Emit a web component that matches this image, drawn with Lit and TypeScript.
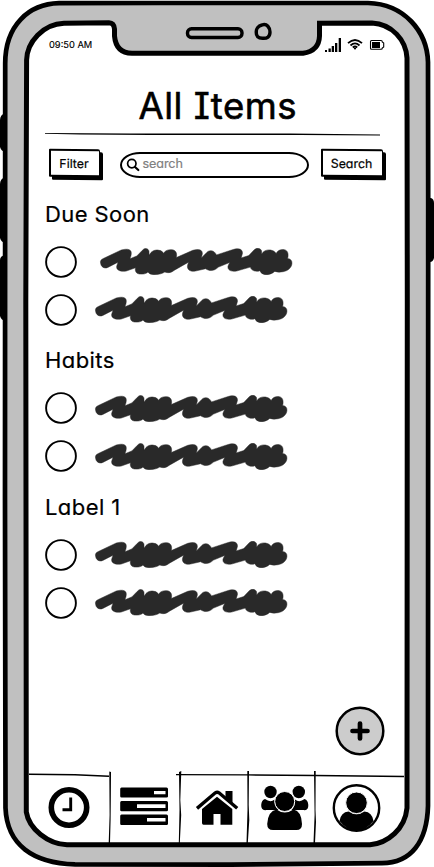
import { LitElement, html, svg, css } from "lit";
import { customElement, property } from "lit/decorators.js";

@customElement("phone-frame")
class PhoneFrame extends LitElement {
  static styles = css`
    :host { display: block; position: absolute; inset: 0; }
    svg { display: block; }
  `;
  render() {
    return html`<svg width="434" height="867" viewBox="0 0 434 867">
      <g fill="#000">
        <path d="M5 113Q0 115 0 120V147Q1 151 5 152ZM5 177Q0 179 0 184V238Q1 242 5 243ZM5 255Q0 256 0 260V316Q1 320 5 321Z" />
        <path d="M427 198H431Q434 199 434 203V258Q433 262 430 262H427Z" />
      </g>
      <path fill="#c0c0c0" stroke="#000" stroke-width="4.700"
        d="M5.200 64C5 25 29 4 59 3.200L160 3H368C404 4 427 31 428 62L428.200 200L428 806C427 842 411 863 382 863.200L230 864.600L75 864.400C33 863 7 845 5.500 808L5 500Z" />
      <path fill="#fff" stroke="#000" stroke-width="5"
        d="M26.600 60C27 42 43 24 64 23.200L109 22.800Q114 23 114.500 29V36Q116 53 132 53.300H303Q319 51 319.500 36V23.300L372 23C392 24 406 40 407 58L407.300 300L407 808C405 829 388 843 370 844.800H67C48 844 29 829 26.300 812L25.800 300Z" />
      <rect x="187.500" y="28.800" width="54.500" height="8.700" rx="4" fill="#c0c0c0" stroke="#000" stroke-width="3.400" />
      <path d="M262 25C267 23 270 28 270 32C270 37 267 38.500 263 38.300C258 38.500 256 36 256.300 32C256 29 258 26 262 25Z" fill="#c0c0c0" stroke="#000" stroke-width="3.400" />
    </svg>`;
  }
}

@customElement("status-bar")
class StatusBar extends LitElement {
  static styles = css`
    :host { display: flex; justify-content: space-between; height: 18px; padding: 36px 49px 0 49px; align-items: center; }
    .time { font-size: 9.3px; letter-spacing: 0; -webkit-text-stroke: 0.150px #000; }
    svg { display: block; }
  `;
  render() {
    return html`<span class="time">09:50 AM</span>
      <svg width="60" height="16" viewBox="325 37 60 16">
        <path d="M325 50h2v2h-2zM328.500 48.500h2.300V52h-2.300zM331.700 46h2.300v6h-2.300zM335 43h2.300v9H335zM338.700 38h2.300v14h-2.300z" />
        <g fill="none" stroke="#000" stroke-width="1.800">
          <path d="M348 43.200Q355 36.700 362 43.200M350.500 45.500Q355 41.300 359.500 45.500M352.800 47.500Q355 45.500 357.200 47.500" />
        </g>
        <circle cx="355" cy="48.500" r="1.100" />
        <path fill="none" stroke="#000" stroke-width="1.100" d="M371.500 40.500H381Q382.300 40.500 382.300 42L383.700 43V47L382.300 48Q382.300 49.300 381 49.300H371.500Q370.500 49.300 370.500 48.300V41.500Q370.500 40.500 371.500 40.500Z" />
        <path d="M372 42h8v6h-8z" />
      </svg>`;
  }
}

@customElement("sketch-button")
class SketchButton extends LitElement {
  @property() label = "";
  static styles = css`
    :host { display: block; }
    .box { box-sizing: border-box; height: 28px; display: flex; align-items: center; justify-content: center; padding: 2px 1.5px 0 0;
      border: 2px solid #000; border-right-width: 1.6px; background: #fff; border-radius: 1px 2px 1px 1px;
      box-shadow: 3px 3px 0 #000; font-size: 12.4px; transform: skewY(0.4deg); -webkit-text-stroke: 0.200px #000; }
  `;
  render() {
    return html`<div class="box">${this.label}</div>`;
  }
}

@customElement("task-row")
class TaskRow extends LitElement {
  @property({ type: Boolean, reflect: true }) indented = false;
  static styles = css`
    :host { display: flex; align-items: center; height: 48.2px; gap: 16.600px; }
    :host([indented]) { gap: 21.500px; }
    svg { display: block; flex: none; }
  `;
  render() {
    return html`<svg width="32" height="32" viewBox="0 0 32 32">
        <circle cx="16" cy="16" r="14.900" fill="#fff" stroke="#000" stroke-width="1.900" />
      </svg>
      <svg width="194.500" height="27" viewBox="10 20 585 82">
        <path fill="#292929" stroke="#292929" stroke-width="1.500" stroke-linejoin="round"
          d="M12 66C10 58 14 55 22 51L75 26C95 21 107 24 105 38Q105 44 101 53L122 44L139 27C146 18 158 21 159 31V42C166 30 174 26 185 26Q198 26 203 36C211 24 224 24 233 26C243 30 244 38 242 49L292 27C312 22 322 26 321 38L318 50L333 35C342 24 357 26 364 41L410 26C430 19 443 22 443 36L439 50L462 43L478 26C486 18 498 20 501 29V38C508 27 519 25 528 26Q541 28 545 37C551 25 562 24 570 25C582 28 583 40 580 52C590 53 594 59 593 68C592 80 580 90 566 92Q552 95 541 91C531 99 522 101 512 101Q499 99 496 89C484 94 468 88 467 78L425 90C405 93 397 85 399 75L404 64L370 78C356 91 343 91 331 83L300 90C282 93 274 84 276 73L279 63L235 88C226 96 215 96 207 93C197 99 186 101 175 101Q160 101 156 93C150 99 140 100 130 99C119 97 116 90 118 80L90 90C68 93 59 85 61 75L65 63L34 79C23 84 13 77 12 66Z" />
      </svg>`;
  }
}

const icons = {
  clock: svg`<circle cx="69" cy="807.500" r="17.700" fill="none" stroke="#000" stroke-width="5.600"/>
    <path d="M70.700 797.500V809.700H62.500" fill="none" stroke="#000" stroke-width="2.900"/>`,
  list: svg`<path fill-rule="evenodd" d="M121.500 787.500h45q1.500 0 1.500 1.500v7.500q0 1-1.500 1h-45q-1.300 0-1.300-1.300v-7.200q0-1.500 1.300-1.500zM154 791v3.200h11.500v-3.200zM121.500 801h45q1.500 0 1.500 1.500v7.500q0 1.300-1.500 1.300h-45q-1.300 0-1.300-1.300v-7.500q0-1.500 1.300-1.500zM137 804.300v3.700h28.500v-3.700zM121.500 814.500h45q1.500 0 1.500 1.500v7.700q0 1.300-1.500 1.300h-45q-1.300 0-1.300-1.300v-7.700q0-1.500 1.300-1.500zM147 818v3.500h18.500V818z"/>`,
  home: svg`<path d="M202 809L217 796.800L232.300 809V824.700H220.500V814H213.500V824.700H203.500Q202 824.700 202 823Z"/>
    <path d="M197 808.400L215.300 792.800Q217.200 791.500 219 792.800L237.200 808.200" fill="none" stroke="#000" stroke-width="3.400"/>
    <path d="M225.500 791H232.500V804L225.500 798Z"/>`,
  group: svg`<circle cx="270" cy="792" r="6.200"/><circle cx="298.300" cy="792" r="6.200"/>
    <path d="M264.500 799Q270 803 274 799.500Q274 807 278 810H266Q260.500 811 260.700 805Q261 800 264.500 799ZM304 799Q299 803 294.500 799.500Q294.500 807 291 810H303Q308 811 307.800 805Q307.500 800 304 799Z"/>
    <path d="M276 809.500Q284 815.500 293 809.500Q301 811 301.500 824Q301.500 830 296 830H272.500Q266.700 830 266.700 824Q267.500 811 276 809.500Z"/>
    <circle cx="284.200" cy="801.500" r="10" stroke="#fff" stroke-width="1"/>`,
  user: svg`<circle cx="356" cy="808" r="22.700" fill="none" stroke="#000" stroke-width="2.400"/>
    <path d="M348 811.500Q356 817 364 811.500Q371.500 812 373 821Q365 831 356 831Q347 831 339 821Q340.500 812 348 811.500Z"/>
    <circle cx="356" cy="802.800" r="10.800" stroke="#fff" stroke-width="1"/>`,
};

@customElement("tab-bar")
class TabBar extends LitElement {
  static styles = css`
    :host { display: grid; grid-template-columns: 81px 70px 67.500px 67px 89.500px; position: relative; height: 72px; margin-left: 29px; }
    svg { display: block; }
    .icon { height: 72px; width: 100%; }
    .rules { position: absolute; left: 0; top: 0; }
  `;
  render() {
    const cells: [keyof typeof icons, number, number][] = [
      ["clock", 29, 81], ["list", 110, 70], ["home", 180, 67.5], ["group", 247.5, 67], ["user", 314.5, 89.5],
    ];
    return html`${cells.map(
        ([name, x, w]) => html`<svg class="icon" viewBox="${x} 771 ${w} 72">${icons[name]}</svg>`,
      )}
      <svg class="rules" width="376" height="72" viewBox="29 771 376 72">
        <path fill="none" stroke="#000" stroke-width="1.400" d="M29 774.300L75 774.700L109 776.300M176 774.600L248 774.900L315 775.500L404 776.500" />
        <path d="M109.300 771.500L111 772L110.800 800L110.600 820L110 843H108.700L109.600 815ZM179 772L181.300 771L180.300 800L181.200 815L179.800 843H178.800L179.500 810ZM247.300 771H249L248.700 805L249.300 820L247.800 843H246.500L247.500 810ZM314 771H315.700L315.500 810L316 822L315 843H313.500L314.600 815Z" />
      </svg>`;
  }
}

@customElement("app-root")
class AppRoot extends LitElement {
  static styles = css`
    :host { display: block; position: relative; width: 434px; height: 867px; overflow: hidden; background: #fff; color: #000;
      font-family: Inter, "Liberation Sans", sans-serif; font-feature-settings: "cv11", "cv08"; line-height: 1; }
    .screen { position: relative; height: 867px; display: flex; flex-direction: column; }
    h1 { margin: 32px 0 0 138.500px; font: inherit; font-size: 36.600px; line-height: 40px; height: 40px; letter-spacing: 0.480px; white-space: nowrap; -webkit-text-stroke: 0.600px #000; }
    .divider { display: block; margin: 6px 0 0 45px; }
    .tools { display: grid; grid-template-columns: 50.500px 189px 61.500px; justify-content: space-between; margin: 13px 52px 0 49px; height: 32px; }
    .field { position: relative; left: 4px; margin-top: 3px; box-sizing: border-box; height: 25.500px; border: 2px solid #000; border-radius: 20px / 13px; display: flex; align-items: center; gap: 3px; padding-left: 4px; }
    .hint { font-size: 12.600px; color: #808080; padding-bottom: 0; letter-spacing: -0.100px; -webkit-text-stroke: 0.200px #808080; }
    .lists { margin: 20px 0 0 45px; height: 440px; }
    h2 { margin: 0; font: inherit; font-size: 22px; line-height: 26px; height: 26px; padding-bottom: 10.700px; letter-spacing: 0.420px; -webkit-text-stroke: 0.200px #000; }
    section { height: 146.450px; }
    .grow { flex: 1; }
    .fab { margin: 0 0 15.500px 335px; display: block; }
    tab-bar { margin-bottom: 24px; }
  `;
  render() {
    return html`<phone-frame></phone-frame>
      <div class="screen">
        <status-bar></status-bar>
        <h1>All Items</h1>
        <svg class="divider" width="336" height="4" viewBox="45 132 336 4">
          <path d="M45 133L130 133.400L290 133.600L380 134.400V135.400L300 135L150 134.900L80 134.500L45 133.800Z" />
        </svg>
        <div class="tools">
          <sketch-button label="Filter"></sketch-button>
          <div class="field">
            <svg width="14" height="14" viewBox="0 0 14 14" fill="none" stroke="#000">
              <circle cx="5.800" cy="5.600" r="4.200" stroke-width="1.700" /><path d="M9 9L12.300 12" stroke-width="2.200" stroke-linecap="round" />
            </svg>
            <span class="hint">search</span>
          </div>
          <sketch-button label="Search"></sketch-button>
        </div>
        <div class="lists">
          ${["Due Soon", "Habits", "Label 1"].map(
            (name, i) => html`<section>
              <h2>${name}</h2>
              <task-row ?indented=${i === 0}></task-row>
              <task-row></task-row>
            </section>`,
          )}
        </div>
        <div class="grow"></div>
        <svg class="fab" width="50" height="50" viewBox="0 0 50 50">
          <circle cx="25" cy="25" r="23.300" fill="#ccc" stroke="#000" stroke-width="2.500" />
          <path d="M25 17.500V32.500M17.500 25H32.500" stroke="#000" stroke-width="4.700" stroke-linecap="round" />
        </svg>
        <tab-bar></tab-bar>
      </div>`;
  }
}
